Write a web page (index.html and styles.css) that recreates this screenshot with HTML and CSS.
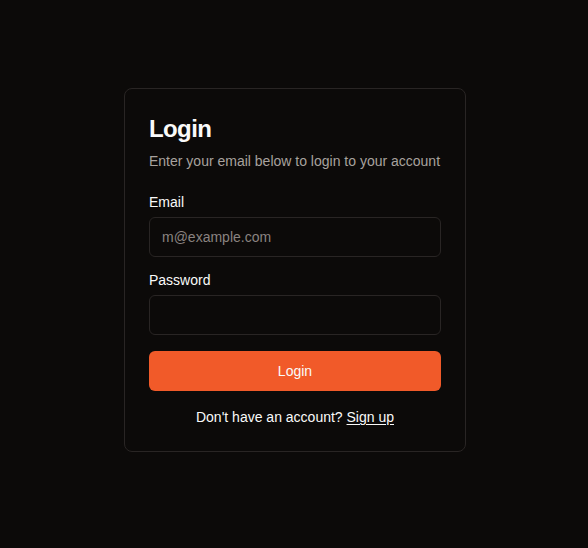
FILE: index.html
```html
<!DOCTYPE html>
<html>
<head>
<meta charset="utf-8">
<link rel="stylesheet" href="styles.css">
</head>
<body>
<main class="page">
  <div class="card">
    <div class="card-header">
      <h1 class="title">Login</h1>
      <p class="desc">Enter your email below to login to your account</p>
    </div>
    <div class="card-content">
      <div class="field">
        <label class="label" for="email">Email</label>
        <input class="input" id="email" type="email" placeholder="m@example.com">
      </div>
      <div class="field">
        <label class="label" for="password">Password</label>
        <input class="input" id="password" type="password">
      </div>
      <button class="btn" type="button">Login</button>
      <p class="footer">Don't have an account? <a class="link" href="#">Sign up</a></p>
    </div>
  </div>
</main>
</body>
</html>
```
FILE: styles.css
```css
* { box-sizing: border-box; }
html, body {
  margin: 0;
  padding: 0;
  background: #0c0a09;
  color: #fafaf9;
  font-family: "Liberation Sans", Arial, sans-serif;
}
.page {
  min-height: 548px;
  display: flex;
  justify-content: center;
  align-items: flex-start;
  padding-top: 88px;
  padding-left: 2px;
}
.card {
  width: 342px;
  border: 1px solid #292524;
  border-radius: 8px;
  background: #0c0a09;
}
.card-header {
  padding: 24px 24px 24px;
  display: flex;
  flex-direction: column;
  gap: 6px;
}
.title {
  margin: 0;
  font-size: 24px;
  line-height: 32px;
  font-weight: 700;
  letter-spacing: -0.6px;
  color: #fafaf9;
}
.desc {
  margin: 0;
  font-size: 14px;
  line-height: 20px;
  color: #a8a29e;
}
.card-content {
  padding: 0 24px 24px;
  display: flex;
  flex-direction: column;
  gap: 16px;
}
.field {
  display: flex;
  flex-direction: column;
  gap: 8px;
}
.label {
  font-size: 14px;
  line-height: 14px;
  font-weight: 500;
  color: #fafaf9;
}
.input {
  height: 40px;
  width: 100%;
  border: 1px solid #292524;
  border-radius: 6px;
  background: #0c0a09;
  padding: 8px 12px;
  font-family: inherit;
  font-size: 14px;
  color: #fafaf9;
  outline: none;
}
.input::placeholder { color: #8a8380; }
.btn {
  height: 40px;
  width: 100%;
  border: none;
  border-radius: 6px;
  background: #f15a29;
  color: #fafaf9;
  font-family: inherit;
  font-size: 14px;
  font-weight: 500;
}
.footer {
  margin: 0;
  text-align: center;
  font-size: 14px;
  line-height: 20px;
  color: #fafaf9;
}
.link {
  color: #fafaf9;
  text-decoration: underline;
  text-underline-offset: 2px;
}
```
